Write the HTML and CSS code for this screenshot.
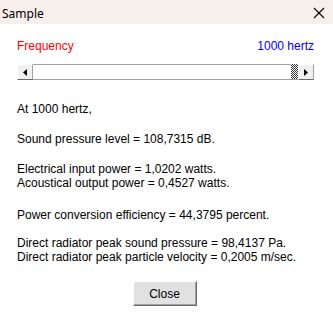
FILE: index.html
```html
<!DOCTYPE html>
<html lang="en">
<head>
    <meta charset="UTF-8">
    <title>Sample</title>
    <link rel="stylesheet" href="styles.css">
</head>
<body>
    <div class="window">
        <div class="title-bar">
            <span class="title">Sample</span>
            <svg class="close-x" width="12" height="12" viewBox="0 0 12 12">
                <path d="M1 1 L11 11 M11 1 L1 11" stroke="#000" stroke-width="1.1" fill="none"/>
            </svg>
        </div>

        <div class="content">
            <div class="freq-row">
                <span class="freq-label">Frequency</span>
                <span class="freq-value">1000 hertz</span>
            </div>

            <div class="scrollbar">
                <div class="sb-btn">
                    <svg width="4" height="7" viewBox="0 0 4 7"><path d="M4 0 L4 7 L0 3.5 Z" fill="#000"/></svg>
                </div>
                <div class="sb-track"></div>
                <div class="sb-thumb"></div>
                <div class="sb-btn">
                    <svg width="4" height="7" viewBox="0 0 4 7"><path d="M0 0 L0 7 L4 3.5 Z" fill="#000"/></svg>
                </div>
            </div>

            <div class="results">
                <p class="line first">At 1000 hertz,</p>
                <p class="line gap">Sound pressure level = 108,7315 dB.</p>
                <p class="line gap">Electrical input power = 1,0202 watts.</p>
                <p class="line">Acoustical output power = 0,4527 watts.</p>
                <p class="line gap power">Power conversion efficiency = 44,3795 percent.</p>
                <p class="line gap direct">Direct radiator peak sound pressure = 98,4137 Pa.</p>
                <p class="line">Direct radiator peak particle velocity = 0,2005 m/sec.</p>
            </div>

            <div class="button-row">
                <button class="close-btn">Close</button>
            </div>
        </div>
    </div>
</body>
</html>
```

FILE: styles.css
```css
body {
    margin: 0;
    background-color: #ffffff;
    font-family: 'Liberation Sans', Arial, sans-serif;
}

.window {
    width: 333px;
    height: 326px;
    background-color: #ffffff;
}

.title-bar {
    height: 24px;
    background-color: #f7efeb;
    display: flex;
    align-items: center;
    justify-content: space-between;
    padding: 0 8px 0 2px;
}

.title {
    font-family: 'Noto Sans', sans-serif;
    font-size: 12px;
    color: #000000;
    margin-top: 2px;
}

.close-x {
    margin-top: 1px;
}

.content {
    padding: 15px 19px 0 17px;
    font-size: 12px;
}

.freq-row {
    display: flex;
    justify-content: space-between;
    line-height: 14px;
}

.freq-label {
    color: #ff0000;
}

.freq-value {
    color: #0000ff;
}

/* barra de desplazamiento estilo clasico */
.scrollbar {
    display: flex;
    height: 16px;
    margin-top: 11px;
    border-bottom: 1px solid #a0a0a0;
    box-sizing: border-box;
}

.sb-btn {
    width: 16px;
    height: 16px;
    box-sizing: border-box;
    background-color: #f0f0f0;
    border-top: 1px solid #ffffff;
    border-left: 1px solid #ffffff;
    border-right: 1px solid #a0a0a0;
    border-bottom: 1px solid #696969;
    display: flex;
    align-items: center;
    justify-content: center;
}

.sb-track {
    flex: 1;
    background-color: #ffffff;
    border-top: 1px solid #a0a0a0;
}

.sb-thumb {
    width: 7px;
    background-image: repeating-conic-gradient(#000000 0 25%, #ffffff 0 50%);
    background-size: 2px 2px;
    opacity: 0.8;
}

.results {
    margin-top: 22px;
}

.line {
    margin: 0;
    line-height: 14px;
    color: #000000;
}

.line.gap {
    margin-top: 16px;
}

.line.power {
    margin-top: 18px;
}

.line.direct {
    margin-top: 14px;
}

.button-row {
    display: flex;
    justify-content: center;
    margin-top: 17px;
    padding-right: 2px;
}

.close-btn {
    width: 64px;
    height: 25px;
    background-color: #e1e1e1;
    border: none;
    border-top: 1px solid #ffffff;
    border-left: 1px solid #ffffff;
    border-right: 1px solid #696969;
    border-bottom: 1px solid #696969;
    box-shadow: inset -1px -1px 0 #a0a0a0;
    font-family: 'Liberation Sans', Arial, sans-serif;
    font-size: 12px;
    color: #000000;
    padding: 0;
}
```
